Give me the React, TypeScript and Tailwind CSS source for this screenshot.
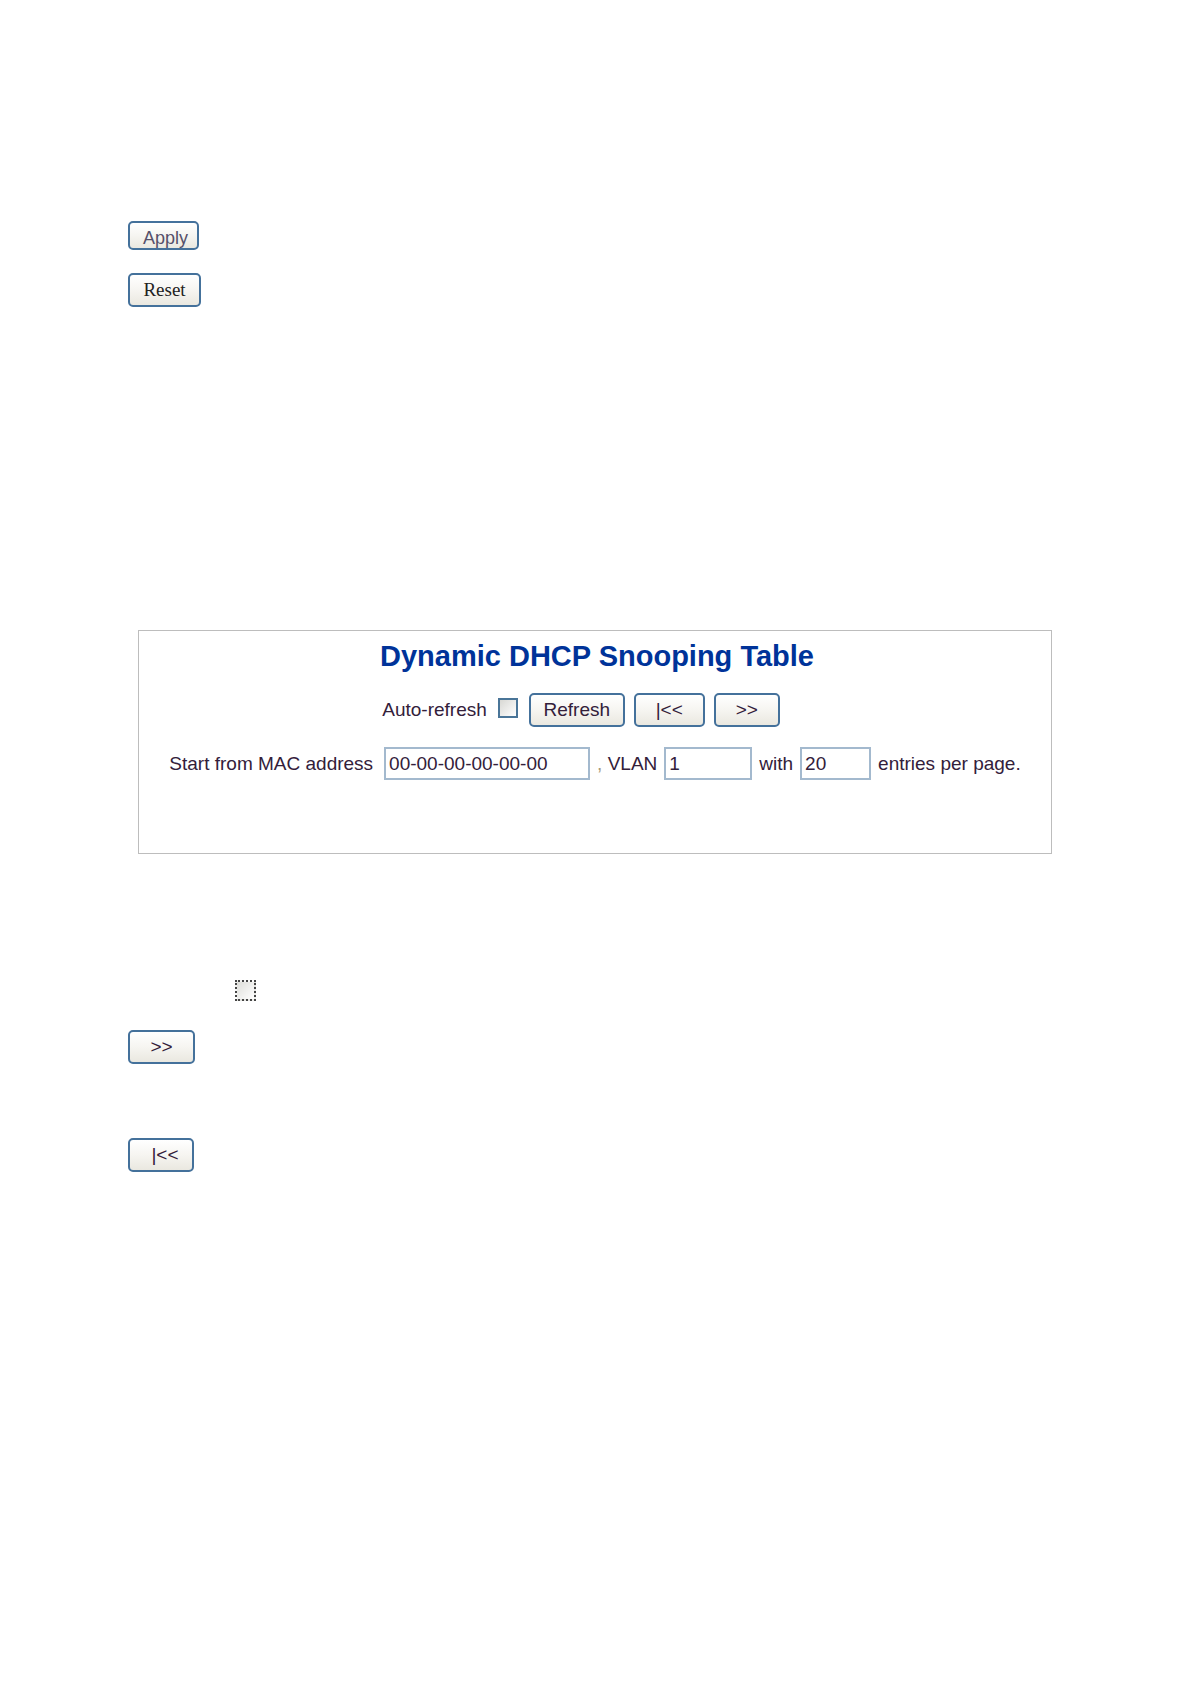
import clsx from "clsx";
import { ButtonHTMLAttributes, FC, InputHTMLAttributes, useState } from "react";

const FIRST_MAC = "00-00-00-00-00-00";

const XpButton: FC<ButtonHTMLAttributes<HTMLButtonElement>> = ({ className, children, ...rest }) => (
  <button
    type="button"
    className={clsx(
      "flex shrink-0 items-center justify-center rounded-[5px] border-2 border-[#44719b] bg-linear-to-b from-white via-[#f6f5f1] to-[#eae8e0] leading-6",
      className,
    )}
    {...rest}
  >
    {children}
  </button>
);

const XpInput: FC<InputHTMLAttributes<HTMLInputElement>> = ({ className, ...rest }) => (
  <input
    type="text"
    className={clsx("h-[33px] shrink-0 border-2 border-[#a3b9ce] bg-white px-[3px] outline-none", className)}
    {...rest}
  />
);

const SnoopingPanel: FC = () => {
  const [autoRefresh, setAutoRefresh] = useState(false);
  const [mac, setMac] = useState(FIRST_MAC);
  const [vlan, setVlan] = useState("1");
  const [entries, setEntries] = useState("20");

  return (
    <section className="mx-[138px] mt-[323px] border border-[#bdbdbd] pt-[7px] pb-[73px]">
      <h1 className="pl-1 text-center text-[29px] leading-9 font-bold text-[#003399]">Dynamic DHCP Snooping Table</h1>

      <div className="mt-[19px] flex items-center justify-center pr-7">
        <label htmlFor="auto-refresh">Auto-refresh</label>
        <input
          id="auto-refresh"
          type="checkbox"
          checked={autoRefresh}
          onChange={e => setAutoRefresh(e.target.checked)}
          className="mr-[11px] mb-1 ml-[11px] size-5 appearance-none border-2 border-[#4a7598] bg-linear-to-br from-[#d8d8d4] to-white checked:bg-[#3f6b8f]"
        />
        <div className="flex gap-[9px]">
          <XpButton className="h-[34px] w-24">Refresh</XpButton>
          <XpButton className="h-[34px] w-[71px]" onClick={() => setMac(FIRST_MAC)}>
            |&lt;&lt;
          </XpButton>
          <XpButton className="h-[34px] w-[66px]">&gt;&gt;</XpButton>
        </div>
      </div>

      <div className="mt-5 flex items-center justify-center gap-[7px] whitespace-nowrap">
        <label htmlFor="mac" className="mr-1">
          Start from MAC address
        </label>
        <XpInput id="mac" className="w-[206px]" value={mac} onChange={e => setMac(e.target.value)} />
        <label htmlFor="vlan">
          <span className="text-[#a59a7c]">,</span> VLAN
        </label>
        <XpInput id="vlan" className="w-[88px]" value={vlan} onChange={e => setVlan(e.target.value)} />
        <label htmlFor="entries">with</label>
        <XpInput
          id="entries"
          className="w-[71px]"
          aria-describedby="entries-unit"
          value={entries}
          onChange={e => setEntries(e.target.value)}
        />
        <span id="entries-unit">entries per page.</span>
      </div>
    </section>
  );
};

const App: FC = () => (
  <main className="min-h-screen bg-white pt-[221px] font-['Liberation_Sans',Arial,sans-serif] text-[19px] leading-6 text-[#33203a]">
    <div className="ml-32 flex flex-col items-start gap-[23px]">
      <XpButton className="h-[29px] w-[71px] pt-1 pl-1 text-lg text-[#55506a]">Apply</XpButton>
      <XpButton className="h-[34px] w-[73px] font-['Liberation_Serif','Times_New_Roman',serif] text-[#222222]">
        Reset
      </XpButton>
    </div>

    <SnoopingPanel />

    <div className="mt-[126px] ml-32 flex flex-col items-start">
      <input
        type="checkbox"
        aria-label="Auto-refresh"
        className="ml-[107px] size-[21px] appearance-none border-2 border-dotted border-[#444444] bg-linear-to-br from-[#dededa] to-white checked:bg-[#444444]"
      />
      <XpButton className="mt-[29px] h-[34px] w-[67px]" aria-label="Next entries">
        &gt;&gt;
      </XpButton>
      <XpButton className="mt-[74px] h-[34px] w-[66px] pl-2" aria-label="First entries">
        |&lt;&lt;
      </XpButton>
    </div>
  </main>
);

export default App;
